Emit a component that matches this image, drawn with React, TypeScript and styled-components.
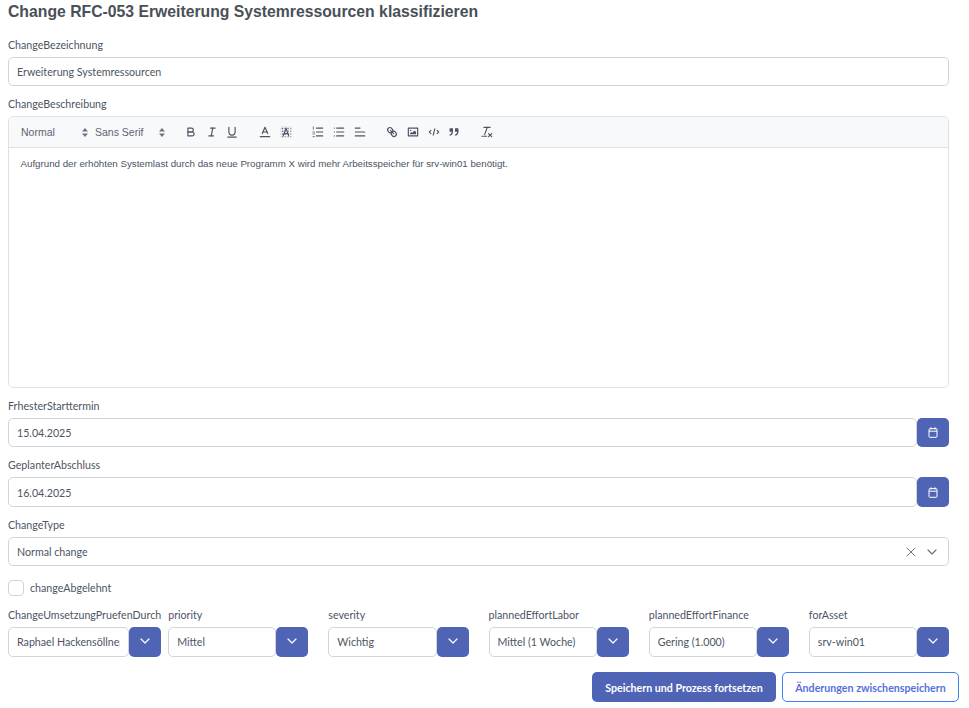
import React from 'react';
import styled, { createGlobalStyle } from 'styled-components';

const GlobalStyle = createGlobalStyle`
    html, body {
        margin: 0;
        padding: 0;
        background: #ffffff;
    }
    body {
        font-family: 'Lato', 'Liberation Sans', sans-serif;
        color: #4b5563;
    }
`;

const Page = styled.div`
    width: 969px;
    height: 708px;
    box-sizing: border-box;
    padding: 0 20px 0 8px;
    overflow: hidden;
`;

const Title = styled.h1`
    margin: 0;
    padding-top: 2px;
    height: 38px;
    box-sizing: border-box;
    font-family: 'Liberation Sans', Arial, sans-serif;
    font-size: 15.75px;
    line-height: 19px;
    font-weight: 700;
    color: #495057;
`;

const Field = styled.div`
    margin-bottom: 11px;
`;

const Label = styled.label`
    display: block;
    height: 14px;
    margin-bottom: 5px;
    font-size: 10.67px;
    line-height: 14px;
    color: #4b5563;
    white-space: nowrap;
`;

const Group = styled.div`
    display: flex;
    height: 29.4px;
`;

const Input = styled.input`
    display: block;
    flex: 1;
    width: 100%;
    min-width: 0;
    height: 29.4px;
    box-sizing: border-box;
    padding: 0 8px;
    border: 1px solid #d1d5db;
    border-radius: 5px;
    outline: none;
    background: #ffffff;
    font-family: 'Lato', sans-serif;
    font-size: 10.67px;
    color: #4b5563;
`;

const IconButton = styled.button`
    flex: none;
    width: 32px;
    height: 29.4px;
    padding: 0;
    display: flex;
    align-items: center;
    justify-content: center;
    border: none;
    border-radius: 5px;
    background: #4f64b5;
    color: #ffffff;
`;

const ChevronButton = styled(IconButton)`
    padding-bottom: 2px;
`;

const Editor = styled.div`
    border: 1px solid #dee2e6;
    border-radius: 5px;
    overflow: hidden;
`;

const Toolbar = styled.div`
    display: flex;
    align-items: center;
    height: 31px;
    box-sizing: border-box;
    padding-left: 12px;
    background: #f8f9fa;
    border-bottom: 1px solid #dee2e6;
    color: #4b5563;
`;

const Picker = styled.span<{ $width: number; $gap: number }>`
    display: flex;
    align-items: center;
    justify-content: space-between;
    width: ${(p) => p.$width}px;
    margin-right: ${(p) => p.$gap}px;
    font-family: 'Liberation Sans', Arial, sans-serif;
    font-size: 10.5px;
    color: #5b6472;
`;

const ToolGroup = styled.span`
    display: flex;
    margin-right: 12px;
`;

const Tool = styled.span`
    display: flex;
    align-items: center;
    justify-content: center;
    width: 20.7px;
    height: 18px;
`;

const EditorBody = styled.div`
    height: 238.7px;
    box-sizing: border-box;
    padding: 9px 11.5px;
    font-family: 'Liberation Sans', Arial, sans-serif;
    font-size: 9.72px;
    line-height: 14px;
    color: #4b5563;
`;

const SelectBox = styled.div`
    display: flex;
    align-items: center;
    height: 29.4px;
    box-sizing: border-box;
    padding: 0 10px 0 8px;
    border: 1px solid #d1d5db;
    border-radius: 5px;
    font-size: 10.67px;
    color: #4b5563;
`;

const SelectValue = styled.span`
    flex: 1;
`;

const ClearIcon = styled.span`
    display: flex;
    margin-right: 10px;
    color: #6b7280;
`;

const CheckRow = styled.div`
    display: flex;
    align-items: center;
    gap: 6px;
    height: 16px;
    margin: 13.5px 0 12.5px;
    font-size: 10.67px;
    color: #4b5563;
`;

const CheckBox = styled.span`
    width: 16px;
    height: 16px;
    box-sizing: border-box;
    border: 1px solid #d1d5db;
    border-radius: 4px;
    background: #ffffff;
`;

const Columns = styled.div`
    display: grid;
    grid-template-columns: repeat(6, minmax(0, 1fr));
    column-gap: 20px;
    margin-bottom: 15.5px;
`;

const Column = styled.div<{ $minWidth?: number }>`
    min-width: ${(p) => p.$minWidth ?? 0}px;
`;

const Actions = styled.div`
    display: flex;
    justify-content: flex-end;
    gap: 6px;
    margin-right: -10px;
`;

const PrimaryButton = styled.button`
    height: 30px;
    width: 184px;
    padding: 0;
    border: none;
    border-radius: 5px;
    background: #4f64b5;
    color: #ffffff;
    font-family: 'Lato', sans-serif;
    font-size: 10.67px;
    font-weight: 700;
`;

const OutlineButton = styled.button`
    height: 30px;
    width: 177px;
    padding: 0;
    border: 1px solid #3b82f6;
    border-radius: 5px;
    background: #ffffff;
    color: #5a6fd8;
    font-family: 'Lato', sans-serif;
    font-size: 10.67px;
    font-weight: 700;
`;

const Ql = styled.svg`
    width: 14px;
    height: 14px;
    flex: none;
    fill: none;
    stroke: currentColor;
    stroke-width: 1.5;
    stroke-linecap: round;
    stroke-linejoin: round;
`;

const UpDown = () => (
    <svg width="6" height="9" viewBox="0 0 6 9" fill="#6b7280">
        <polygon points="3,0 6,3.4 0,3.4" />
        <polygon points="3,9 6,5.6 0,5.6" />
    </svg>
);

const Chevron = ({ color = 'currentColor' }: { color?: string }) => (
    <svg width="12" height="12" viewBox="0 0 12 12" fill="none" stroke={color} strokeWidth="1.2" strokeLinecap="round" strokeLinejoin="round">
        <polyline points="2,4 6,8 10,4" />
    </svg>
);

const Cross = () => (
    <svg width="10" height="10" viewBox="0 0 10 10" fill="none" stroke="currentColor" strokeWidth="1" strokeLinecap="round">
        <line x1="1" y1="1" x2="9" y2="9" />
        <line x1="9" y1="1" x2="1" y2="9" />
    </svg>
);

const CalendarIcon = () => (
    <svg width="10" height="11" viewBox="0 0 10 11" fill="none" stroke="currentColor" strokeWidth="1">
        <rect x="1" y="1.6" width="8" height="8.7" rx="1" />
        <line x1="1" y1="4.2" x2="9" y2="4.2" />
        <line x1="3" y1="0.3" x2="3" y2="2.6" />
        <line x1="7" y1="0.3" x2="7" y2="2.6" />
    </svg>
);

const BoldIcon = () => (
    <Ql viewBox="0 0 18 18">
        <path d="M5,4H9.5A2.5,2.5,0,0,1,12,6.5v0A2.5,2.5,0,0,1,9.5,9H5A0,0,0,0,1,5,9V4A0,0,0,0,1,5,4Z" />
        <path d="M5,9h5.5A2.5,2.5,0,0,1,13,11.5v0A2.5,2.5,0,0,1,10.5,14H5a0,0,0,0,1,0,0V9A0,0,0,0,1,5,9Z" />
    </Ql>
);

const ItalicIcon = () => (
    <Ql viewBox="0 0 18 18">
        <line x1="7" x2="13" y1="4" y2="4" />
        <line x1="5" x2="11" y1="14" y2="14" />
        <line x1="8" x2="10" y1="14" y2="4" />
    </Ql>
);

const UnderlineIcon = () => (
    <Ql viewBox="0 0 18 18">
        <path d="M5,3V9a4.012,4.012,0,0,0,4,4H9a4.012,4.012,0,0,0,4-4V3" />
        <line x1="3.5" x2="14.5" y1="15.5" y2="15.5" />
    </Ql>
);

const ColorIcon = () => (
    <Ql viewBox="0 0 18 18">
        <line x1="3" x2="15" y1="15" y2="15" />
        <polyline points="5.5 11 9 3 12.5 11" />
        <line x1="11.63" x2="6.38" y1="9" y2="9" />
    </Ql>
);

const BackgroundIcon = () => (
    <Ql viewBox="0 0 18 18">
        <pattern id="dots" width="2" height="2" patternUnits="userSpaceOnUse">
            <rect width="1" height="1" fill="#6b7280" stroke="none" />
        </pattern>
        <rect x="2" y="2" width="14" height="14" fill="url(#dots)" stroke="none" />
        <polyline points="5.5 14 9 4 12.5 14" />
        <line x1="11.63" x2="6.38" y1="11" y2="11" />
    </Ql>
);

const OrderedIcon = () => (
    <Ql viewBox="0 0 18 18">
        <line x1="7" x2="15" y1="4" y2="4" />
        <line x1="7" x2="15" y1="9" y2="9" />
        <line x1="7" x2="15" y1="14" y2="14" />
        <line x1="3" x2="3" y1="2.5" y2="5.5" strokeWidth="1" />
        <line x1="2.5" x2="4.5" y1="9" y2="9" strokeWidth="1" />
        <line x1="2.5" x2="4.5" y1="11.5" y2="11.5" strokeWidth="1" />
        <line x1="2.5" x2="4.5" y1="15" y2="15" strokeWidth="1" />
    </Ql>
);

const BulletIcon = () => (
    <Ql viewBox="0 0 18 18">
        <line x1="6" x2="15" y1="4" y2="4" />
        <line x1="6" x2="15" y1="9" y2="9" />
        <line x1="6" x2="15" y1="14" y2="14" />
        <line x1="3" x2="3" y1="4" y2="4" />
        <line x1="3" x2="3" y1="9" y2="9" />
        <line x1="3" x2="3" y1="14" y2="14" />
    </Ql>
);

const AlignIcon = () => (
    <Ql viewBox="0 0 18 18">
        <line x1="3" x2="15" y1="9" y2="9" />
        <line x1="3" x2="15" y1="14" y2="14" />
        <line x1="3" x2="9" y1="4" y2="4" />
    </Ql>
);

const LinkIcon = () => (
    <Ql viewBox="0 0 18 18">
        <line x1="7" x2="11" y1="7" y2="11" />
        <path d="M8.9,4.577a3.476,3.476,0,0,1,.36,4.679A3.476,3.476,0,0,1,4.577,8.9C3.185,7.5,2.035,6.4,4.217,4.217S7.5,3.185,8.9,4.577Z" />
        <path d="M13.423,9.1a3.476,3.476,0,0,0-4.679-.36,3.476,3.476,0,0,0,.36,4.679c1.392,1.392,2.5,2.542,4.679.36S14.815,10.5,13.423,9.1Z" />
    </Ql>
);

const ImageIcon = () => (
    <Ql viewBox="0 0 18 18">
        <rect height="10" width="12" x="3" y="4" />
        <circle cx="6" cy="7" r="1" fill="currentColor" stroke="none" />
        <polyline points="5 12 5 11 7 9 8 10 11 7 13 9 13 12 5 12" fill="currentColor" stroke="none" />
    </Ql>
);

const CodeIcon = () => (
    <Ql viewBox="0 0 18 18">
        <polyline points="5 7 3 9 5 11" />
        <polyline points="13 7 15 9 13 11" />
        <line x1="10" x2="8" y1="5" y2="13" />
    </Ql>
);

const QuoteIcon = () => (
    <Ql viewBox="0 0 18 18">
        <rect height="3" width="3" x="4" y="5" fill="currentColor" />
        <rect height="3" width="3" x="11" y="5" fill="currentColor" />
        <path d="M7,8c0,4.031-3,5-3,5" />
        <path d="M14,8c0,4.031-3,5-3,5" />
    </Ql>
);

const CleanIcon = () => (
    <Ql viewBox="0 0 18 18">
        <line x1="5" x2="13" y1="3" y2="3" />
        <line x1="6" x2="9.35" y1="12" y2="3" />
        <line x1="11" x2="15" y1="11" y2="15" />
        <line x1="15" x2="11" y1="11" y2="15" />
        <line x1="2.5" x2="8.5" y1="14.5" y2="14.5" />
    </Ql>
);

const lookups = [
    { label: 'ChangeUmsetzungPruefenDurch', value: 'Raphael Hackensöllner', minWidth: 153 },
    { label: 'priority', value: 'Mittel' },
    { label: 'severity', value: 'Wichtig' },
    { label: 'plannedEffortLabor', value: 'Mittel (1 Woche)' },
    { label: 'plannedEffortFinance', value: 'Gering (1.000)' },
    { label: 'forAsset', value: 'srv-win01' },
];

const dates = [
    { label: 'FrhesterStarttermin', value: '15.04.2025' },
    { label: 'GeplanterAbschluss', value: '16.04.2025' },
];

const App: React.FC = () => {
    return (
        <Page>
            <GlobalStyle />
            <Title>Change RFC-053 Erweiterung Systemressourcen klassifizieren</Title>

            <Field>
                <Label>ChangeBezeichnung</Label>
                <Input readOnly value="Erweiterung Systemressourcen" />
            </Field>

            <Field>
                <Label>ChangeBeschreibung</Label>
                <Editor>
                    <Toolbar>
                        <Picker $width={67} $gap={7}>Normal<UpDown /></Picker>
                        <Picker $width={70} $gap={15.5}>Sans Serif<UpDown /></Picker>
                        <ToolGroup>
                            <Tool><BoldIcon /></Tool>
                            <Tool><ItalicIcon /></Tool>
                            <Tool><UnderlineIcon /></Tool>
                        </ToolGroup>
                        <ToolGroup>
                            <Tool><ColorIcon /></Tool>
                            <Tool><BackgroundIcon /></Tool>
                        </ToolGroup>
                        <ToolGroup>
                            <Tool><OrderedIcon /></Tool>
                            <Tool><BulletIcon /></Tool>
                            <Tool><AlignIcon /></Tool>
                        </ToolGroup>
                        <ToolGroup>
                            <Tool><LinkIcon /></Tool>
                            <Tool><ImageIcon /></Tool>
                            <Tool><CodeIcon /></Tool>
                            <Tool><QuoteIcon /></Tool>
                        </ToolGroup>
                        <ToolGroup>
                            <Tool><CleanIcon /></Tool>
                        </ToolGroup>
                    </Toolbar>
                    <EditorBody>
                        Aufgrund der erhöhten Systemlast durch das neue Programm X wird mehr Arbeitsspeicher für srv-win01 benötigt.
                    </EditorBody>
                </Editor>
            </Field>

            {dates.map((d) => (
                <Field key={d.label}>
                    <Label>{d.label}</Label>
                    <Group>
                        <Input readOnly value={d.value} />
                        <IconButton><CalendarIcon /></IconButton>
                    </Group>
                </Field>
            ))}

            <Field>
                <Label>ChangeType</Label>
                <SelectBox>
                    <SelectValue>Normal change</SelectValue>
                    <ClearIcon><Cross /></ClearIcon>
                    <Chevron color="#6b7280" />
                </SelectBox>
            </Field>

            <CheckRow>
                <CheckBox />
                changeAbgelehnt
            </CheckRow>

            <Columns>
                {lookups.map((l) => (
                    <Column key={l.label} $minWidth={l.minWidth}>
                        <Label>{l.label}</Label>
                        <Group>
                            <Input readOnly value={l.value} />
                            <ChevronButton><Chevron /></ChevronButton>
                        </Group>
                    </Column>
                ))}
            </Columns>

            <Actions>
                <PrimaryButton>Speichern und Prozess fortsetzen</PrimaryButton>
                <OutlineButton>Änderungen zwischenspeichern</OutlineButton>
            </Actions>
        </Page>
    );
};

export default App;
